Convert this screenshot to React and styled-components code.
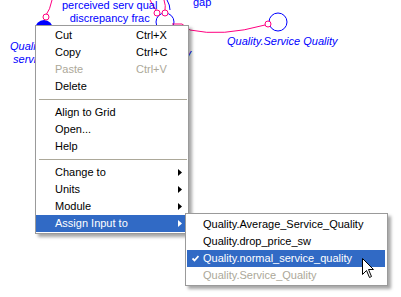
import React from "react"
import styled, { createGlobalStyle } from "styled-components"

const GlobalStyle = createGlobalStyle`
  html, body {
    margin: 0;
    padding: 0;
    background: #ffffff;
    overflow: hidden;
  }
`

const Canvas = styled.div`
  position: relative;
  width: 401px;
  height: 297px;
  overflow: hidden;
  background: #ffffff;
  font-family: "Liberation Sans", Arial, sans-serif;
  font-size: 11px;
`

const Diagram = styled.svg`
  position: absolute;
  left: 0;
  top: 0;
`

const NodeLabel = styled.div`
  position: absolute;
  left: ${p => p.x}px;
  top: ${p => p.y}px;
  color: #0000ff;
  line-height: 13px;
  white-space: nowrap;
  font-style: ${p => (p.italic ? "italic" : "normal")};
  text-align: ${p => p.align || "left"};
`

const Menu = styled.div`
  position: absolute;
  left: ${p => p.x}px;
  top: ${p => p.y}px;
  width: ${p => p.w}px;
  box-sizing: border-box;
  background: #ffffff;
  border: 1px solid #9a9a9a;
  box-shadow: 3px 3px 3px rgba(0, 0, 0, 0.35);
  padding: ${p => p.pad};
`

const Item = styled.div`
  display: grid;
  grid-template-columns: 81px 1fr 4px;
  align-items: center;
  height: 17px;
  line-height: 17px;
  padding: 0 6px 0 19px;
  color: ${p => (p.active ? "#ffffff" : p.disabled ? "#aca899" : "#000000")};
  background: ${p => (p.active ? "#316ac5" : "transparent")};
  white-space: nowrap;
`

const Shortcut = styled.span``

const Separator = styled.div`
  height: 9px;
  display: flex;
  align-items: center;
  padding: 0 1px 0 3px;
  &::after {
    content: "";
    flex: 1;
    height: 1px;
    background: #aca899;
  }
`

const SubItem = styled.div`
  position: relative;
  height: 17px;
  line-height: 17px;
  padding-left: 16px;
  color: ${p => (p.active ? "#ffffff" : p.disabled ? "#aca899" : "#000000")};
  background: ${p => (p.active ? "#316ac5" : "transparent")};
  white-space: nowrap;
`

const Check = styled.svg`
  position: absolute;
  left: 5px;
  top: 5px;
`

const Cursor = styled.svg`
  position: absolute;
  left: 362px;
  top: 258px;
`

const Arrow = ({ color }) => (
  <svg width="4" height="7" viewBox="0 0 4 7">
    <polygon points="0,0 4,3.5 0,7" fill={color} />
  </svg>
)

export default function App() {
  return (
    <Canvas>
      <GlobalStyle />
      <Diagram width="401" height="297">
        <path d="M52 0 Q50 10 46 15" stroke="#ff0080" fill="none" strokeWidth="1" />
        <circle cx="44" cy="29" r="9" fill="#0000ff" />
        <circle cx="46" cy="17" r="3" fill="#ffffff" stroke="#ff0080" />
        <path d="M150 0 Q154 8 157 11" stroke="#ff0080" fill="none" />
        <path d="M164 0 Q166 6 165 10" stroke="#ff0080" fill="none" />
        <path d="M167 0 Q170 5 170 10" stroke="#0000ff" fill="none" />
        <circle cx="165" cy="22" r="9" fill="none" stroke="#0000ff" />
        <circle cx="157" cy="13" r="3" fill="#ffffff" stroke="#ff0080" />
        <circle cx="165" cy="13" r="3" fill="#ffffff" stroke="#ff0080" />
        <path d="M172 24 L182 24 Q186 27 190 30 Q222 37 265 25" stroke="#ff0080" fill="none" />
        <circle cx="278" cy="22" r="9" fill="none" stroke="#0000ff" />
        <circle cx="268" cy="24" r="3" fill="#ffffff" stroke="#ff0080" />
      </Diagram>

      <NodeLabel x={62} y={-1} align="center">
        perceived serv qual
        <br />
        discrepancy frac
      </NodeLabel>
      <NodeLabel x={193} y={-4}>gap</NodeLabel>
      <NodeLabel x={227} y={35} italic>Quality.Service Quality</NodeLabel>
      <NodeLabel x={10} y={40} italic>
        Quality
        <br />
        &nbsp;service
      </NodeLabel>
      <NodeLabel x={157} y={47} italic>Quality</NodeLabel>

      <Menu x={35} y={25} w={154} pad="1px 0 1px 0">
        <Item>Cut<Shortcut>Ctrl+X</Shortcut></Item>
        <Item>Copy<Shortcut>Ctrl+C</Shortcut></Item>
        <Item disabled>Paste<Shortcut>Ctrl+V</Shortcut></Item>
        <Item>Delete</Item>
        <Separator />
        <Item>Align to Grid</Item>
        <Item>Open...</Item>
        <Item>Help</Item>
        <Separator />
        <Item>Change to<span /><Arrow color="#000" /></Item>
        <Item>Units<span /><Arrow color="#000" /></Item>
        <Item>Module<span /><Arrow color="#000" /></Item>
        <Item active>Assign Input to<span /><Arrow color="#fff" /></Item>
      </Menu>

      <Menu x={185} y={213} w={203} pad="2px 2px 1px 1px">
        <SubItem>Quality.Average_Service_Quality</SubItem>
        <SubItem>Quality.drop_price_sw</SubItem>
        <SubItem active>
          <Check width="7" height="7" viewBox="0 0 7 7">
            <polyline points="0.5,3.5 2.5,5.5 6.5,1" stroke="#ffffff" strokeWidth="1.8" fill="none" />
          </Check>
          Quality.normal_service_quality
        </SubItem>
        <SubItem disabled>Quality.Service_Quality</SubItem>
      </Menu>

      <Cursor width="13" height="21" viewBox="0 0 13 21">
        <path d="M0.5 0.5 L0.5 16.5 L4.5 12.5 L7.5 19.5 L9.5 18.5 L6.5 11.5 L11.5 11.5 Z" fill="#ffffff" stroke="#000000" strokeWidth="1" />
      </Cursor>
    </Canvas>
  )
}
